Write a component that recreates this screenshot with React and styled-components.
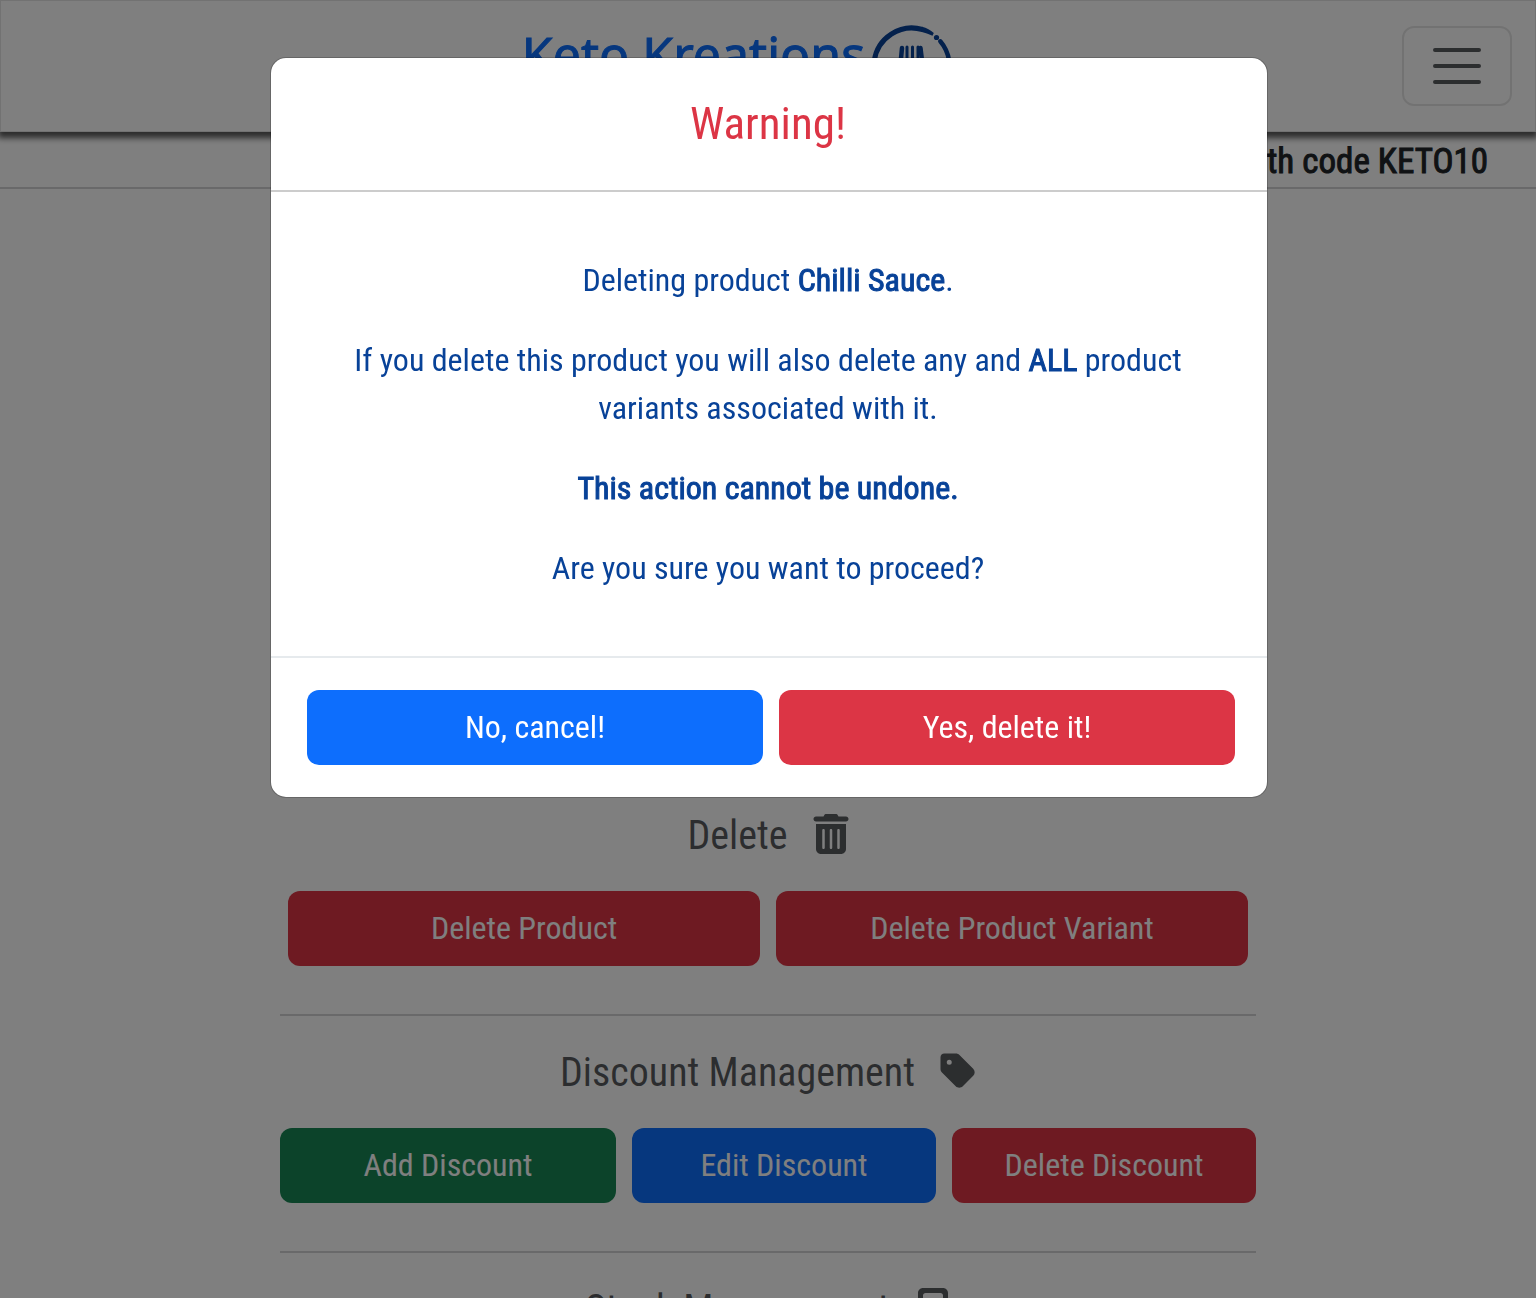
import React from "react";
import styled, { createGlobalStyle } from "styled-components";
import { FaTrashCan, FaTag, FaCalculator } from "react-icons/fa6";

const colors = {
  ink: "#212529",
  muted: "rgba(33, 37, 41, 0.75)",
  primary: "#0d6efd",
  success: "#198754",
  danger: "#dc3545",
  navy: "#084298",
  line: "rgba(33, 37, 41, 0.2)",
};

const GlobalStyle = createGlobalStyle`
  *, *::before, *::after { box-sizing: border-box; }
  body {
    margin: 0;
    height: 100vh;
    overflow: hidden;
    background: #fff;
    color: ${colors.ink};
    font-family: "Roboto Condensed", "Liberation Sans Narrow", Roboto, sans-serif;
    font-size: 32px;
    line-height: 48px;
  }
`;

const Navbar = styled.nav`
  position: relative;
  display: grid;
  grid-template-columns: 1fr auto 1fr;
  align-items: center;
  height: 132px;
  padding: 0 23px;
  background: #fff;
  border: 1px solid rgba(0, 0, 0, 0.1);
  box-shadow: 0 4px 6px 2px rgba(0, 0, 0, 0.65);
`;

const Brand = styled.a`
  grid-column: 2;
  display: flex;
  align-items: flex-start;
  gap: 7px;
  margin-right: 60px;
  color: ${colors.primary};
  font-family: "Noto Sans", sans-serif;
  font-size: 50px;
  line-height: 58px;
  text-decoration: none;
  white-space: nowrap;
  -webkit-text-stroke: 1px currentColor;
`;

const Toggler = styled.button`
  grid-column: 3;
  justify-self: end;
  display: grid;
  place-items: center;
  width: 110px;
  height: 80px;
  padding: 0;
  background: none;
  border: 2px solid rgba(0, 0, 0, 0.1);
  border-radius: 12px;
`;

const Strong = styled.strong`
  font-weight: 400;
  -webkit-text-stroke: 1px currentColor;
`;

const Promo = styled.p`
  display: flex;
  justify-content: flex-end;
  margin: 0;
  padding: 6px 48px 1px;
  border-bottom: 2px solid ${colors.line};
  font-size: 35px;
`;

const Main = styled.main`
  max-width: 976px;
  margin: 0 auto;
  padding-top: 622px;
`;

const Section = styled.section`
  & + & {
    margin-top: 48px;
    padding-top: 32px;
    border-top: 2px solid ${colors.line};
  }
`;

const Heading = styled.h2`
  margin: 0 0 30px;
  padding-left: 2px;
  color: ${colors.muted};
  font-size: 40px;
  font-weight: 400;
  line-height: 50px;
  text-align: center;

  svg {
    width: auto;
    height: 40px;
    margin-left: 23px;
    vertical-align: -5px;
  }
`;

const Actions = styled.div`
  display: grid;
  grid-template-columns: ${(p) => p.$columns};
  gap: 16px;
  padding: 0 ${(p) => (p.$inset ? "8px" : "0")};
`;

const Button = styled.button`
  height: 75px;
  padding: 0 24px 2px;
  background: ${(p) => colors[p.$tone]};
  border: 0;
  border-radius: 12px;
  color: #fff;
  font: inherit;
`;

const Backdrop = styled.div`
  position: fixed;
  inset: 0;
  padding: 57px 14px 57px 16px;
  background: rgba(0, 0, 0, 0.5);
`;

const Dialog = styled.div`
  max-width: 998px;
  margin: 0 auto;
  background: #fff;
  background-clip: padding-box;
  border: 1px solid rgba(0, 0, 0, 0.2);
  border-radius: 16px;
  text-align: center;
`;

const DialogHeader = styled.header`
  padding: 38px 34px 38px 32px;
  border-bottom: 2px solid #ccc;
`;

const DialogTitle = styled.h1`
  margin: 0;
  color: ${colors.danger};
  font-size: 45px;
  font-weight: 400;
  line-height: 56px;
`;

const DialogBody = styled.div`
  padding: 64px 66px 64px 64px;
  color: ${colors.navy};
`;

const Text = styled.p`
  margin: 0;
  & + & { margin-top: 32px; }
`;

const DialogFooter = styled.footer`
  padding: 32px 32px 32px 36px;
  border-top: 2px solid #e6eaed;
`;

function Emblem() {
  return (
    <svg
      width="82"
      height="82"
      viewBox="0 0 82 82"
      fill="none"
      stroke={colors.navy}
      overflow="visible"
      aria-hidden="true"
    >
      <path d="M40 79A38 38 0 1 1 50.5 4.5" strokeWidth="5" />
      <path
        d="M50 1.8Q57 3.5 61.8 8L60.5 10.800Q55 8.500 49 6.800Z"
        fill={colors.navy}
        stroke="none"
      />
      <circle cx="64.5" cy="12.5" r="2.6" fill={colors.navy} stroke="none" />
      <path d="M68.3 16.3A38 38 0 0 1 40 79" strokeWidth="4.5" strokeLinecap="round" />
      <path d="M30 23L28 44M48.5 23L51 44" strokeWidth="4.5" strokeLinecap="round" />
      <path d="M35 22V44M40.5 22V44M46 22V44" strokeWidth="3" strokeLinecap="round" />
    </svg>
  );
}

export default function App() {
  return (
    <>
      <GlobalStyle />
      <Navbar>
        <Brand href="#">
          Keto Kreations
          <Emblem />
        </Brand>
        <Toggler type="button" aria-label="Toggle navigation">
          <svg width="60" height="60" viewBox="0 0 30 30" aria-hidden="true">
            <path
              d="M4 7h22M4 15h22M4 23h22"
              stroke={colors.muted}
              strokeWidth="2"
              strokeLinecap="round"
            />
          </svg>
        </Toggler>
      </Navbar>
      <Promo>
        <Strong>with code KETO10</Strong>
      </Promo>
      <Main>
        <Section>
          <Heading>
            Delete
            <FaTrashCan />
          </Heading>
          <Actions $columns="1fr 1fr" $inset>
            <Button $tone="danger">Delete Product</Button>
            <Button $tone="danger">Delete Product Variant</Button>
          </Actions>
        </Section>
        <Section>
          <Heading>
            Discount Management
            <FaTag />
          </Heading>
          <Actions $columns="336px 1fr 1fr">
            <Button $tone="success">Add Discount</Button>
            <Button $tone="primary">Edit Discount</Button>
            <Button $tone="danger">Delete Discount</Button>
          </Actions>
        </Section>
        <Section>
          <Heading>
            Stock Management
            <FaCalculator />
          </Heading>
        </Section>
      </Main>
      <Backdrop>
        <Dialog role="dialog" aria-modal="true" aria-labelledby="dialog-title">
          <DialogHeader>
            <DialogTitle id="dialog-title">Warning!</DialogTitle>
          </DialogHeader>
          <DialogBody>
            <Text>
              Deleting product <Strong>Chilli Sauce</Strong>.
            </Text>
            <Text>
              If you delete this product you will also delete any and <Strong>ALL</Strong> product
              variants associated with it.
            </Text>
            <Text>
              <Strong>This action cannot be undone.</Strong>
            </Text>
            <Text>Are you sure you want to proceed?</Text>
          </DialogBody>
          <DialogFooter>
            <Actions $columns="1fr 1fr">
              <Button $tone="primary">No, cancel!</Button>
              <Button $tone="danger">Yes, delete it!</Button>
            </Actions>
          </DialogFooter>
        </Dialog>
      </Backdrop>
    </>
  );
}
